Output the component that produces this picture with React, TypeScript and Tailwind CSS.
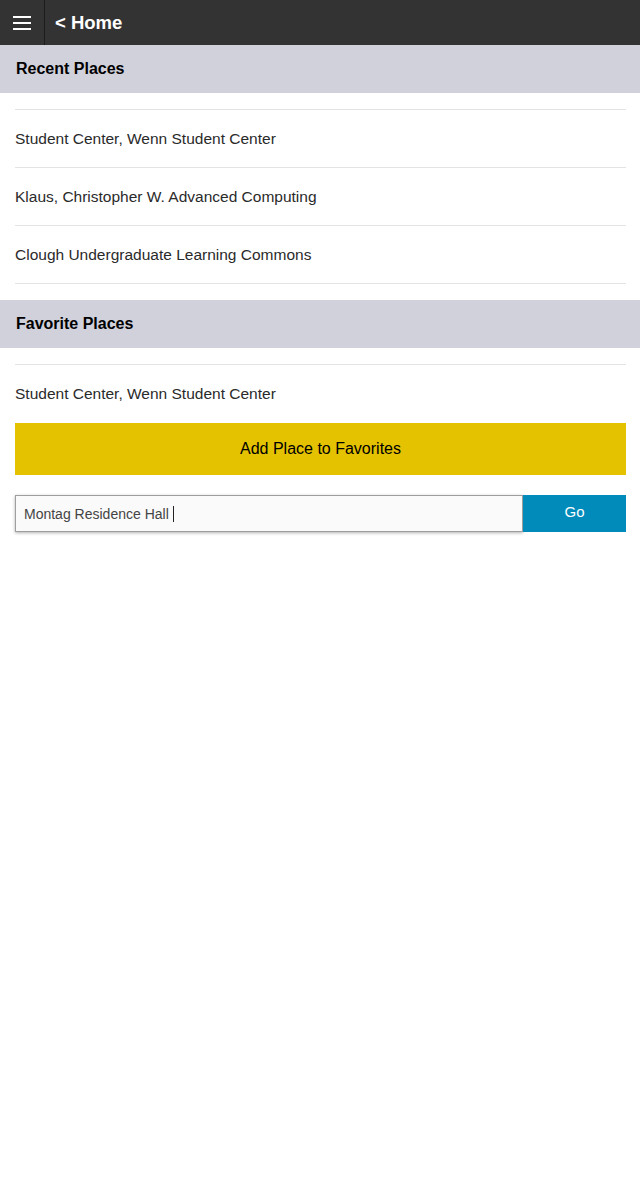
export default function App() {
  const recent = [
    "Student Center, Wenn Student Center",
    "Klaus, Christopher W. Advanced Computing",
    "Clough Undergraduate Learning Commons",
  ];
  const favorites = ["Student Center, Wenn Student Center"];

  return (
    <div className="min-h-[1200px] bg-white font-['Liberation_Sans',Arial,sans-serif] text-[#222]">
      {/* Top bar */}
      <div className="flex h-[45px] items-center bg-[#333333]">
        <div className="flex h-full w-[45px] items-center justify-center border-r border-[#1c1c1c]">
          <svg width="20" height="16" viewBox="0 0 20 16">
            <rect x="1" y="1" width="18" height="2" fill="#fff" />
            <rect x="1" y="7" width="18" height="2" fill="#fff" />
            <rect x="1" y="13" width="18" height="2" fill="#fff" />
          </svg>
        </div>
        <span className="pl-[10px] pt-[1px] text-[18.5px] font-bold text-white">&lt; Home</span>
      </div>

      {/* Recent */}
      <div className="flex h-12 items-center bg-[#d0d1db] px-4 text-base font-bold text-black">
        Recent Places
      </div>
      <div className="py-4 pl-[15px] pr-[14px]">
        <div className="border-b border-[#e3e3e3]">
          {recent.map((r) => (
            <div key={r} className="flex h-[58px] items-center border-t border-[#e3e3e3] text-[15.5px] text-[#2a2a2a]">
              {r}
            </div>
          ))}
        </div>
      </div>

      {/* Favorites */}
      <div className="flex h-12 items-center bg-[#d0d1db] px-4 text-base font-bold text-black">
        Favorite Places
      </div>
      <div className="pl-[15px] pr-[14px] pt-4">
        {favorites.map((f) => (
          <div key={f} className="flex h-[59px] items-center border-t border-[#e3e3e3] text-[15.5px] text-[#2a2a2a]">
            {f}
          </div>
        ))}
        <div className="flex h-[52px] items-center justify-center bg-[#e5c200] text-base text-black">
          Add Place to Favorites
        </div>

        <div className="mt-5 flex h-[37px]">
          <div className="flex flex-1 items-center border border-[#9e9e9e] bg-[#fafafa] pl-2 text-sm text-[#444] shadow-[0_1px_3px_rgba(0,0,0,0.3)]">
            Montag Residence Hall
            <span className="ml-[4px] inline-block h-[16px] w-px bg-[#222]" />
          </div>
          <div className="flex w-[103px] items-center justify-center bg-[#008bbb] pb-[3px] text-[15px] text-white">
            Go
          </div>
        </div>
      </div>
    </div>
  );
}
